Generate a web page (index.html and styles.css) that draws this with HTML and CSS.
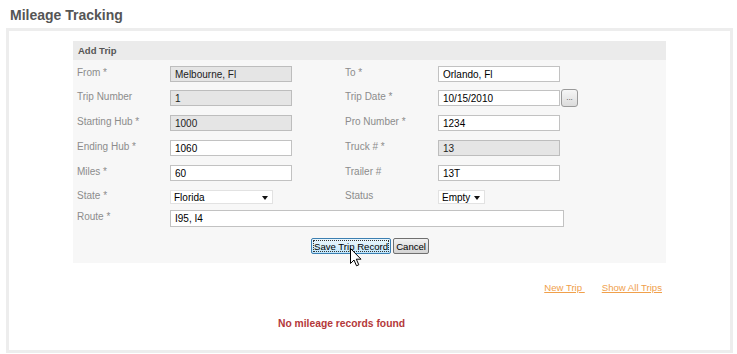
FILE: index.html
```html
<!DOCTYPE html>
<html lang="en">
<head>
    <meta charset="UTF-8">
    <meta name="viewport" content="width=device-width, initial-scale=1.0">
    <title>Mileage Tracking</title>
    <link rel="stylesheet" href="styles.css">
</head>
<body>
    <h2 class="page-title">Mileage Tracking</h2>
    <div class="box">
        <div class="panel">
            <div class="panel-head">Add Trip</div>
            <div class="form-grid">
                <label>From *</label>
                <div><input type="text" class="field" value="Melbourne, Fl" disabled></div>
                <label>To *</label>
                <div><input type="text" class="field" value="Orlando, Fl"></div>

                <label>Trip Number</label>
                <div><input type="text" class="field" value="1" disabled></div>
                <label>Trip Date *</label>
                <div class="date-row"><input type="text" class="field" value="10/15/2010"><button class="pick">...</button></div>

                <label>Starting Hub *</label>
                <div><input type="text" class="field" value="1000" disabled></div>
                <label>Pro Number *</label>
                <div><input type="text" class="field" value="1234"></div>

                <label>Ending Hub *</label>
                <div><input type="text" class="field" value="1060"></div>
                <label>Truck # *</label>
                <div><input type="text" class="field" value="13" disabled></div>

                <label>Miles *</label>
                <div><input type="text" class="field" value="60"></div>
                <label>Trailer #</label>
                <div><input type="text" class="field" value="13T"></div>

                <label>State *</label>
                <div><span class="drop state"><select><option>Florida</option></select></span></div>
                <label>Status</label>
                <div><span class="drop status"><select><option>Empty</option></select></span></div>

                <label>Route *</label>
                <div class="wide"><input type="text" class="field route" value="I95, I4"></div>
            </div>
            <div class="actions">
                <button class="btn focused">Save Trip Record</button>
                <button class="btn">Cancel</button>
            </div>
        </div>
        <div class="links">
            <a href="#">New Trip&nbsp;</a>
            <a href="#">Show All Trips</a>
        </div>
        <div class="empty">No mileage records found</div>
    </div>

    <svg class="cursor" width="12" height="19" viewBox="0 0 12 19">
        <path d="M0.5 0.5 L0.5 15.5 L4 12 L6.5 17.8 L8.8 16.8 L6.3 11.2 L11 11.2 Z" fill="#fff" stroke="#000" stroke-width="1"/>
    </svg>
</body>
</html>
```

FILE: styles.css
```css
* { margin: 0; padding: 0; box-sizing: border-box; }
body {
    font-family: "Liberation Sans", Arial, sans-serif;
    font-size: 10px; color: #000; background: #fff;
}
.page-title {
    font-size: 14px; line-height: 16px; font-weight: bold;
    color: #555; padding: 7px 0 0 10px;
}
.box {
    margin: 5px 0 0 6px; width: 727px; height: 325px;
    border: 3px solid #ededed;
}
.panel {
    width: 593px; margin: 10px auto 0;
    background: #f7f7f7;
}
.panel-head {
    height: 19px; line-height: 19px; padding-left: 5px;
    background: #ebebeb; color: #555;
    font-size: 9.5px; font-weight: bold;
}
.form-grid {
    display: grid;
    grid-template-columns: 93px 175px 93px 1fr;
    grid-template-rows: 24px 25px 25px 25px 24px 21px 28px;
    padding: 6px 0 0 4px;
}
.form-grid label {
    color: #8c8c8c; line-height: 12px; padding-top: 1px;
}
.field {
    display: block; width: 122px; height: 16px;
    border: 1px solid #c2c2c2; background: #fff;
    padding: 0 4px; font: 10px "Liberation Sans", Arial, sans-serif; color: #000;
}
.field:disabled { background: #e5e5e5; border-color: #bdbdbd; color: #222; }
.field.route { width: 394px; height: 17px; }
.wide { grid-column: 2 / 5; }
.date-row { display: flex; align-items: flex-start; gap: 1px; }
.pick {
    width: 17px; height: 18px; margin-top: -1px;
    border: 1px solid #9a9a9a; border-radius: 3px;
    background: linear-gradient(#f6f6f6, #dcdcdc);
    font-size: 8px; color: #444; line-height: 12px;
}
.drop { position: relative; display: inline-block; }
.drop select {
    appearance: none; -webkit-appearance: none;
    display: block; height: 14px; margin-top: 1px;
    border: 1px solid #e2e2e2; background: #fff;
    padding: 0 3px; font: 10px "Liberation Sans", Arial, sans-serif; color: #000;
}
.drop::after {
    content: ""; position: absolute; right: 5px; top: 7px;
    border-left: 3px solid transparent; border-right: 3px solid transparent;
    border-top: 4px solid #111;
}
.drop.state select { width: 103px; }
.drop.status select { width: 47px; }
.actions {
    display: flex; justify-content: center; gap: 2px;
    padding: 0 0 9px 1px;
}
.btn {
    height: 16px; padding: 0 2px;
    border: 1px solid #707070; border-radius: 2px;
    background: linear-gradient(#f2f2f2, #e2e2e2 50%, #d4d4d4);
    font: 9.6px "Liberation Sans", Arial, sans-serif; color: #000;
}
.btn.focused {
    border-color: #3c7fb1;
    background: linear-gradient(#eaf6fd, #d9f0fc 50%, #bee6fd);
    outline: 1px dotted #333; outline-offset: -3px;
}
.links {
    width: 593px; margin: 19px auto 0;
    padding-right: 4px; font-size: 9.6px;
    display: flex; justify-content: flex-end; gap: 17px;
}
.links a { color: #f0a04b; text-decoration: underline; }
.empty {
    margin: 25px 0 0 269px;
    color: #b4383a; font-weight: bold; font-size: 10.3px;
}
.cursor { position: absolute; left: 350px; top: 248px; }
```
